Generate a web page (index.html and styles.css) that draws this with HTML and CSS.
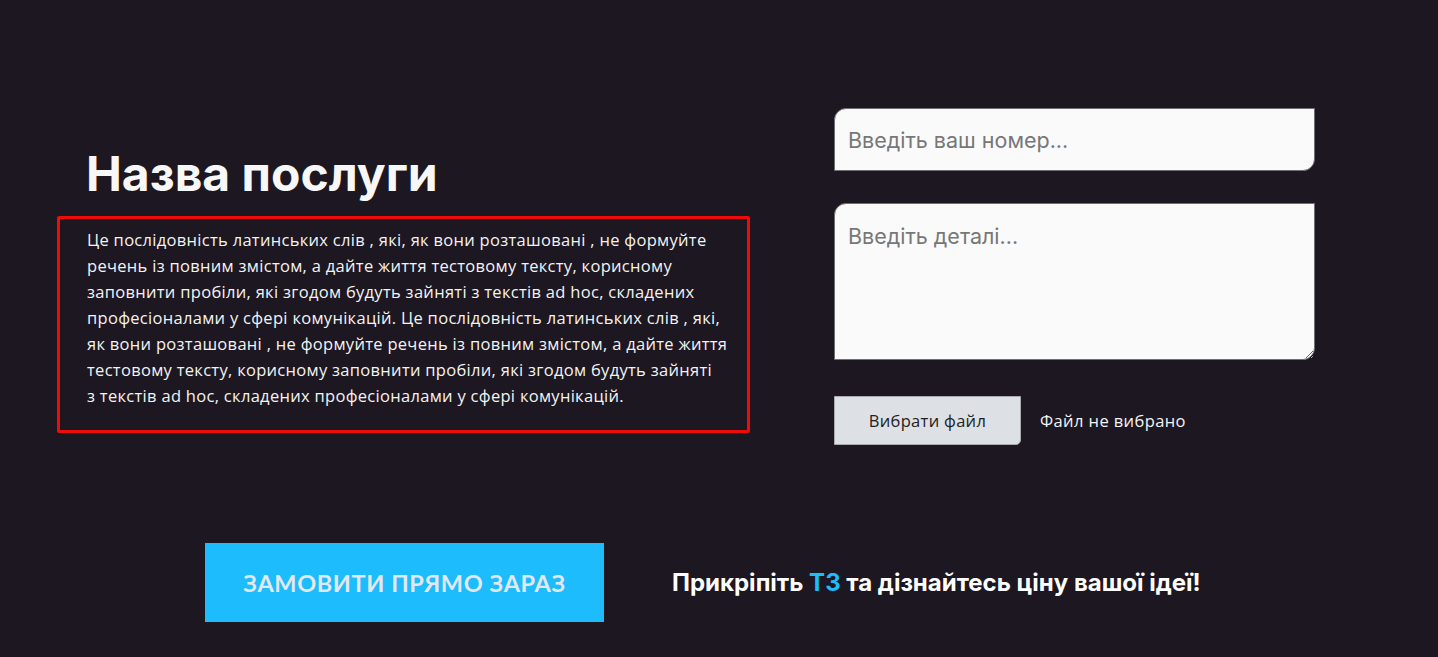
FILE: index.html
```html
<!DOCTYPE html>
<html lang="uk">
<head>
<meta charset="utf-8">
<title>Назва послуги</title>
<link rel="stylesheet" href="styles.css">
</head>
<body>
<main class="page">
  <section class="top">
    <div class="info">
      <h1 class="title">Назва послуги</h1>
      <div class="desc">
        <p>Це послідовність латинських слів , які, як вони розташовані , не формуйте речень із повним змістом, а дайте життя тестовому тексту, корисному заповнити пробіли, які згодом будуть зайняті з текстів ad hoc, складених професіоналами у сфері комунікацій. Це послідовність латинських слів , які, як вони розташовані , не формуйте речень із повним змістом, а дайте життя тестовому тексту, корисному заповнити пробіли, які згодом будуть зайняті з&nbsp;текстів ad hoc, складених професіоналами у сфері комунікацій.</p>
      </div>
    </div>
    <form class="form">
      <input class="field" type="text" placeholder="Введіть ваш номер...">
      <textarea class="field area" placeholder="Введіть деталі..."></textarea>
      <div class="file">
        <span class="file-btn">Вибрати файл</span>
        <span class="file-name">Файл не вибрано</span>
      </div>
    </form>
  </section>
  <section class="bottom">
    <a class="cta" href="#">ЗАМОВИТИ ПРЯМО ЗАРАЗ</a>
    <p class="note">Прикріпіть <span class="accent">ТЗ</span> та дізнайтесь ціну вашої ідеї!</p>
  </section>
</main>
</body>
</html>
```

FILE: styles.css
```css
* { box-sizing: border-box; }
html, body { margin: 0; padding: 0; }
body {
  background: #1d1721;
  color: #f2f2f2;
  font-family: "Open Sans", "Noto Sans", sans-serif;
  width: 1438px;
  height: 657px;
  overflow: hidden;
}
.page { padding: 108px 0 0 0; }
.top {
  display: flex;
  align-items: flex-start;
}
.info {
  width: 693px;
  margin-left: 57px;
  margin-top: 36px;
}
.title {
  margin: 0 0 12px 29px;
  font-family: "Inter", sans-serif;
  font-weight: 700;
  font-size: 48px;
  line-height: 60px;
  color: #f7f7f7;
}
.desc {
  border: 3px solid #f00b0b;
  border-radius: 2px;
  padding: 8px 15px 21px 27px;
}
.desc p {
  margin: 0;
  font-size: 16.5px;
  letter-spacing: 0.3px;
  line-height: 26px;
  color: #f3f3f3;
}
.form {
  width: 481px;
  margin-left: 84px;
  display: flex;
  flex-direction: column;
}
.field {
  display: block;
  width: 481px;
  height: 63px;
  border: 1px solid #6f6f73;
  border-radius: 12px 0 12px 0;
  background: #fafafa;
  padding: 0 13px;
  font-family: "Inter", "Open Sans", sans-serif;
  font-size: 21.5px;
  color: #333;
  outline: none;
}
.field::placeholder { color: #777; }
.area {
  height: 157px;
  margin-top: 32px;
  padding-top: 19px;
  resize: vertical;
}
.file {
  display: flex;
  align-items: center;
  margin-top: 36px;
}
.file-btn {
  width: 187px;
  height: 49px;
  display: flex;
  align-items: center;
  justify-content: center;
  background: #dde0e5;
  border: 1px solid #a9abb0;
  border-radius: 0 0 5px 0;
  color: #222;
  font-size: 16.5px;
  letter-spacing: 0.3px;
}
.file-name {
  margin-left: 19px;
  font-size: 16.5px;
  letter-spacing: 0.4px;
  color: #f3f3f3;
}
.bottom {
  display: flex;
  align-items: center;
  margin: 98px 0 0 205px;
}
.cta {
  width: 399px;
  height: 79px;
  display: flex;
  align-items: center;
  justify-content: center;
  background: #1cbcfd;
  color: #e3e7ef;
  text-decoration: none;
  font-family: "Lato", sans-serif;
  font-weight: 700;
  font-size: 23.5px;
  letter-spacing: 0.6px;
}
.note {
  margin: 0 0 0 68px;
  font-family: "Inter", sans-serif;
  font-weight: 700;
  font-size: 24px;
  color: #ffffff;
}
.accent { color: #1cbcfd; }
```
